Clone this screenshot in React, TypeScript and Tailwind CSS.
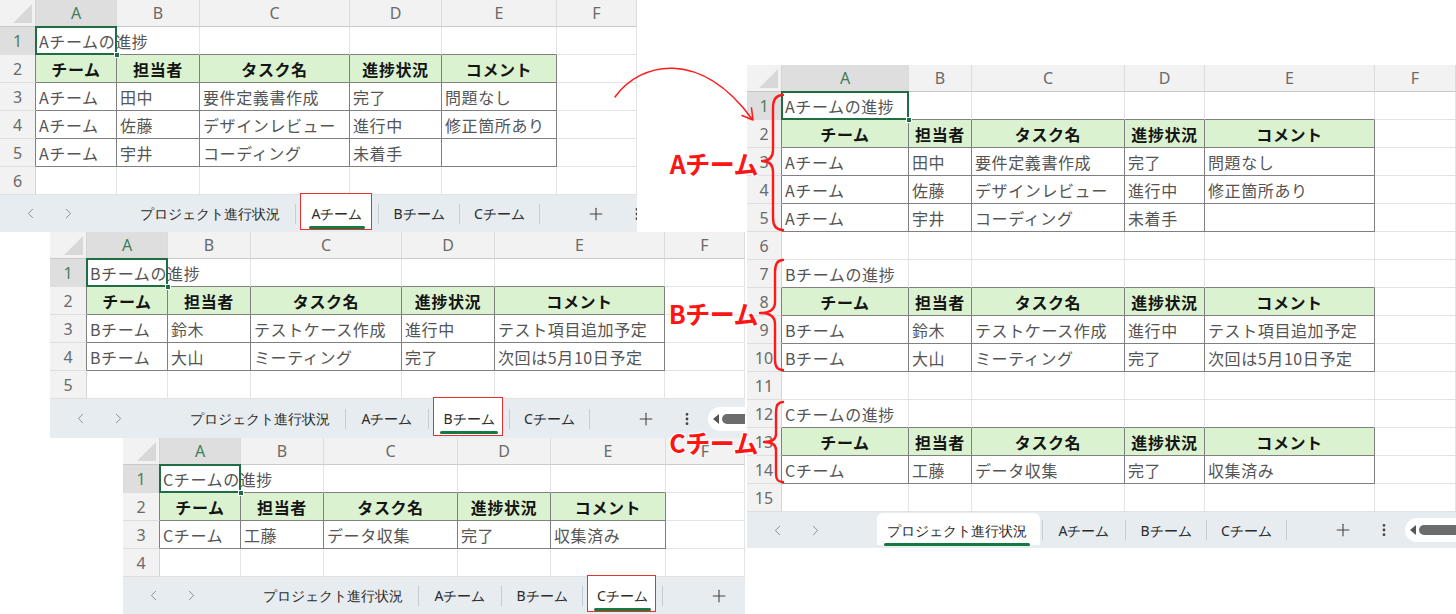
import { Fragment } from 'react'
import { ChevronLeft, ChevronRight, Plus, EllipsisVertical } from 'lucide-react'

type Kind = 'title' | 'head' | 'body' | 'blank'

interface Row {
  k: Kind
  c: string[]
}

const LETTERS = ['A', 'B', 'C', 'D', 'E', 'F']
const HEAD = ['チーム', '担当者', 'タスク名', '進捗状況', 'コメント']
const TABS = ['プロジェクト進行状況', 'Aチーム', 'Bチーム', 'Cチーム']
const TAB_W = ['w-[170px]', 'w-[82px]', 'w-[80px]', 'w-[79px]']

const title = (t: string): Row => ({ k: 'title', c: [t] })
const head: Row = { k: 'head', c: HEAD }
const body = (...c: string[]): Row => ({ k: 'body', c })
const blank: Row = { k: 'blank', c: [] }

const A_ROWS = [
  title('Aチームの進捗'),
  head,
  body('Aチーム', '田中', '要件定義書作成', '完了', '問題なし'),
  body('Aチーム', '佐藤', 'デザインレビュー', '進行中', '修正箇所あり'),
  body('Aチーム', '宇井', 'コーディング', '未着手', ''),
]
const B_ROWS = [
  title('Bチームの進捗'),
  head,
  body('Bチーム', '鈴木', 'テストケース作成', '進行中', 'テスト項目追加予定'),
  body('Bチーム', '大山', 'ミーティング', '完了', '次回は5月10日予定'),
]
const C_ROWS = [title('Cチームの進捗'), head, body('Cチーム', '工藤', 'データ収集', '完了', '収集済み')]

function TabBar({ active, boxed }: { active: number; boxed: boolean }) {
  return (
    <div className="flex-1 flex items-center bg-[#e6ecef]">
      {/* sheet navigation */}
      <div className="w-[125px] shrink-0 flex items-center pl-[11px] text-[#8a8f93]">
        <span className="w-[38px] flex justify-center">
          <ChevronLeft size={17} strokeWidth={1.4} />
        </span>
        <span className="w-[38px] flex justify-center">
          <ChevronRight size={17} strokeWidth={1.4} />
        </span>
      </div>

      {TABS.map((t, i) => (
        <Fragment key={t}>
          <div className={`${TAB_W[i]} shrink-0 self-stretch relative flex items-center justify-center`}>
            {i === active &&
              (boxed ? (
                <div className="absolute left-[4px] right-[6px] -top-[2px] bottom-[2px] bg-white border-[1.5px] border-[#e8312f]" />
              ) : (
                <div className="absolute left-[5px] right-[2px] top-px bottom-[3px] bg-white rounded-t-[6px]" />
              ))}
            <span className="relative text-[14px] text-[#2b2b2b] whitespace-nowrap">
              {t}
              {i === active && (
                <span className="absolute -left-[3px] -right-[3px] -bottom-[5px] h-[3px] rounded-full bg-[#137a43]" />
              )}
            </span>
          </div>
          <div className="w-px h-[20px] shrink-0 bg-[#c6cdd2]" />
        </Fragment>
      ))}

      <div className="w-[36px] shrink-0" />
      <div className="w-[40px] shrink-0 flex justify-center text-[#444]">
        <Plus size={20} strokeWidth={1.3} />
      </div>
      <div className="w-[42px] shrink-0 flex justify-center text-[#444]">
        <EllipsisVertical size={16} strokeWidth={2.2} />
      </div>
      {/* horizontal scroll */}
      <div className="w-[90px] shrink-0 h-[24px] flex items-center gap-[3px] bg-white rounded-l-full pl-[5px]">
        <span className="w-0 h-0 border-y-[5px] border-y-transparent border-r-[6px] border-r-[#555]" />
        <span className="w-[70px] h-[10px] rounded-full bg-[#6c6c6c]" />
      </div>
    </div>
  )
}

function Sheet({
  grid,
  rows,
  active,
  boxed,
  className,
}: {
  grid: string
  rows: Row[]
  active: number
  boxed: boolean
  className: string
}) {
  const inTable = (r: number, c: number) => {
    const row = rows[r]
    if (!row || c < 0 || c > 4) return false
    return row.k === 'head' || row.k === 'body'
  }

  return (
    <div className={`absolute flex flex-col bg-white overflow-hidden ${className}`}>
      <div className={`grid ${grid} font-['Noto_Sans_CJK_JP','Noto_Sans',sans-serif]`}>
        {/* column header */}
        <div className="h-[27px] bg-[#f2f2f2] border-r border-b border-r-[#d4d4d4] border-b-[#c9c9c9] flex items-end justify-end pr-[3px] pb-[3px]">
          <div className="w-[19px] h-[19px] bg-[#d8d8d8] [clip-path:polygon(100%_0,100%_100%,0_100%)]" />
        </div>
        {LETTERS.map((l, i) => (
          <div
            key={l}
            className={`h-[27px] flex items-center justify-center text-[16px] font-['Noto_Sans',sans-serif] border-r border-b border-r-[#dcdcdc] border-b-[#c9c9c9] ${
              i === 0 ? 'bg-[#dedede] text-[#3f7d5a]' : 'bg-[#f2f2f2] text-[#6a6a6a]'
            }`}
          >
            {l}
          </div>
        ))}

        {rows.map((row, r) => (
          <Fragment key={r}>
            <div
              className={`h-[28px] flex items-center justify-center text-[16px] font-['Noto_Sans',sans-serif] border-r border-b border-b-[#dedede] ${
                inTable(r, 0) ? 'border-r-[#808080]' : 'border-r-[#d4d4d4]'
              } ${r === 0 ? 'bg-[#dedede] text-[#4f7f62]' : 'bg-[#f2f2f2] text-[#6a6a6a]'}`}
            >
              {r + 1}
            </div>
            {LETTERS.map((_, c) => {
              const t = row.c[c] ?? ''
              const rb = inTable(r, c) || inTable(r, c + 1) ? 'border-r-[#808080]' : 'border-r-[#e3e3e3]'
              const bb = inTable(r, c) || inTable(r + 1, c) ? 'border-b-[#808080]' : 'border-b-[#e3e3e3]'
              let look = 'pl-[3px] text-[#555] overflow-hidden'
              if (row.k === 'head' && c <= 4) look = 'justify-center bg-[#daf2d0] font-bold text-[#141414] overflow-hidden'
              if (row.k === 'title' && c === 0) look = 'pl-[3px] text-[#555] relative'
              return (
                <div
                  key={c}
                  className={`h-[28px] flex items-center text-[16px] tracking-[0.6px] whitespace-nowrap border-r border-b ${rb} ${bb} ${look}`}
                >
                  {t}
                  {r === 0 && c === 0 && (
                    <>
                      <span className="absolute -left-px -top-px -right-px -bottom-px border-2 border-[#1f6e43]" />
                      <span className="absolute -right-[4px] -bottom-[4px] w-[6px] h-[6px] bg-[#1f6e43] border border-white" />
                    </>
                  )}
                </div>
              )
            })}
          </Fragment>
        ))}
      </div>
      <TabBar active={active} boxed={boxed} />
    </div>
  )
}

function Label({ text, className }: { text: string; className: string }) {
  return (
    <div
      className={`absolute h-[30px] flex items-center text-[25px] leading-none font-bold tracking-[-0.5px] text-[#ff1414] font-['Noto_Sans_CJK_JP','Noto_Sans',sans-serif] [text-shadow:-1px_-1px_0_#fff,1px_-1px_0_#fff,-1px_1px_0_#fff,1px_1px_0_#fff,0_0_3px_#fff] ${className}`}
    >
      {text}
    </div>
  )
}

export default function App() {
  const summary = [...A_ROWS, blank, ...B_ROWS, blank, ...C_ROWS, blank]

  return (
    <div className="relative w-[1456px] h-[614px] bg-white overflow-hidden">
      <Sheet
        grid="grid-cols-[36px_81px_83px_150px_92px_115px_80px]"
        rows={[...A_ROWS, blank]}
        active={1}
        boxed
        className="left-0 top-0 w-[637px] h-[232px]"
      />
      <Sheet
        grid="grid-cols-[37px_81px_83px_151px_93px_170px_80px]"
        rows={[...B_ROWS, blank]}
        active={2}
        boxed
        className="left-[50px] top-[232px] w-[695px] h-[206px]"
      />
      <Sheet
        grid="grid-cols-[37px_81px_83px_134px_93px_115px_79px]"
        rows={[...C_ROWS, blank]}
        active={3}
        boxed
        className="left-[123px] top-[438px] w-[622px] h-[176px]"
      />
      <Sheet
        grid="grid-cols-[35px_127px_63px_153px_80px_170px_81px]"
        rows={summary}
        active={0}
        boxed={false}
        className="left-[747px] top-[65px] w-[709px] h-[483px]"
      />

      {/* annotations */}
      <svg className="absolute inset-0 pointer-events-none" width={1456} height={614} viewBox="0 0 1456 614" fill="none">
        <g stroke="#ff1a1a" strokeLinecap="round" strokeLinejoin="round">
          <path d="M615 97 C640 62 700 48 752 119" strokeWidth={1.5} />
          <path d="M751.5 108 L753 120 L742 115.5" strokeWidth={1.5} />
          <path
            d="M783 95 C776 95 773 99 773 108 L773 150 C773 157 769 161 762 161 C769 161 773 165 773 172 L773 218 C773 226 776 230 783 230"
            strokeWidth={2.4}
          />
          <path
            d="M783 260 C778 260 775 264 775 272 L775 302 C775 309 771 313 760 313 C771 313 775 317 775 324 L775 360 C775 367 778 370 783 370"
            strokeWidth={2.4}
          />
          <path
            d="M783 402 C778 402 776 405 776 412 L776 434 C776 439 772 442 764 442 C772 442 776 445 776 450 L776 474 C776 480 778 482 783 482"
            strokeWidth={2.4}
          />
        </g>
      </svg>
      <Label text="Aチーム" className="right-[698px] top-[148px]" />
      <Label text="Bチーム" className="right-[698px] top-[298px]" />
      <Label text="Cチーム" className="right-[698px] top-[427px]" />
    </div>
  )
}
